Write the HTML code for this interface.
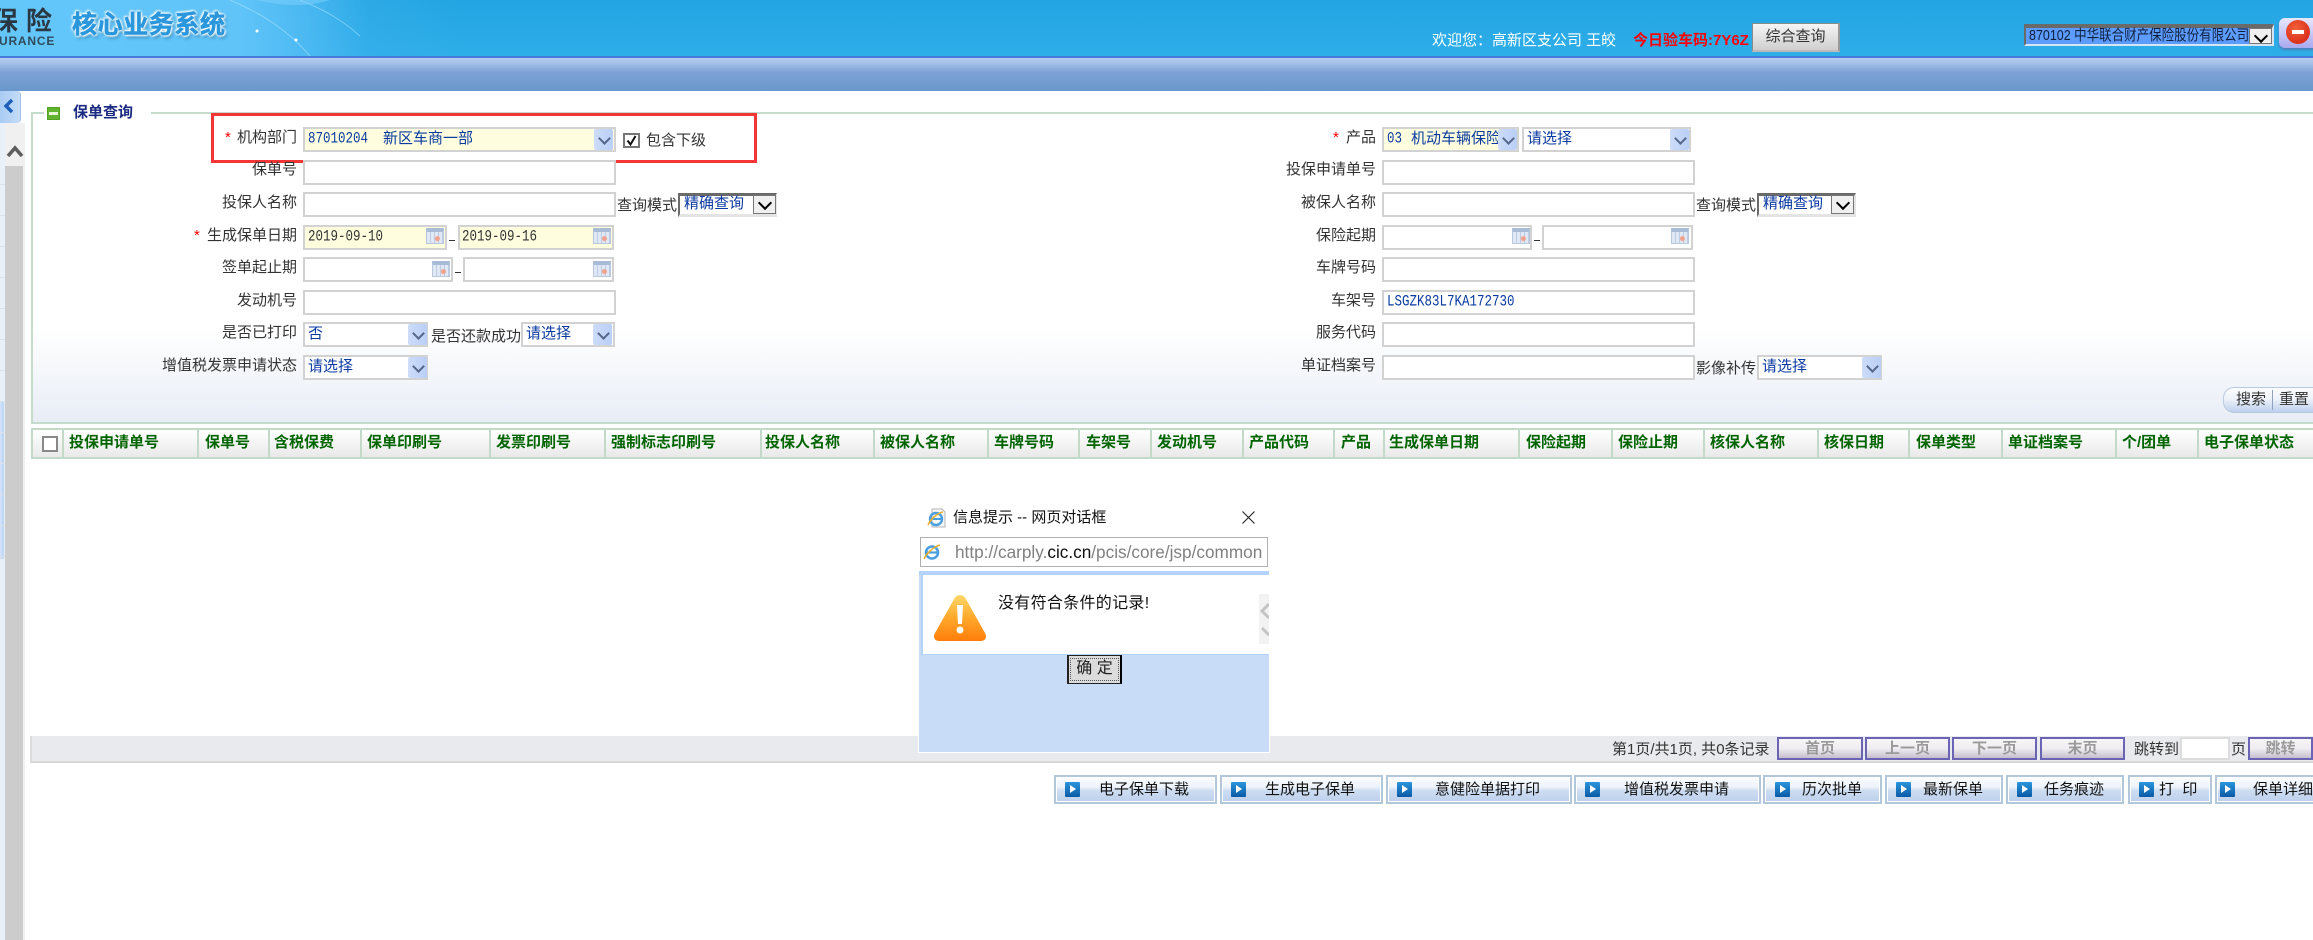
<!DOCTYPE html>
<html lang="zh">
<head>
<meta charset="utf-8">
<title>保单查询</title>
<style>
*{box-sizing:border-box}
html,body{margin:0;padding:0;width:2313px;height:940px;overflow:hidden;background:#fff}
body{position:relative;font-family:"Liberation Sans","WenQuanYi Zen Hei","Noto Sans CJK SC",sans-serif;font-size:15px;color:#333}
.a{position:absolute}
.t{position:absolute;white-space:nowrap;line-height:20px;height:20px}
.l{position:absolute;white-space:nowrap;line-height:20px;height:20px;width:200px;text-align:right}
.s{position:absolute;color:#f00;font-size:15px;line-height:20px;font-family:"Liberation Sans",sans-serif}
.i{position:absolute;height:25px;border:2px solid #d2d2d2;background:#fff}
.y{background:#fefedf}
.v{position:absolute;white-space:pre;line-height:20px;height:20px;color:#0b3aa0;margin-top:1px}
.m{font-family:"Liberation Mono","WenQuanYi Zen Hei",monospace;font-size:12.5px;transform:scaleY(1.22);transform-origin:50% 50%;margin-top:0}
.b{position:absolute;width:19px;height:21px;border-radius:2px;background:linear-gradient(90deg,#cddcf9,#b9cff6)}
.b::after{content:"";position:absolute;left:6px;top:5px;width:7px;height:7px;border-right:2.5px solid #56658a;border-bottom:2.5px solid #56658a;transform:rotate(45deg)}
.c{position:absolute;width:18px;height:16px;border:1px solid #b9c8dc;background:radial-gradient(circle at 65% 60%,#f2a28c 0 2px,transparent 3px),repeating-linear-gradient(90deg,#dfe8f4 0 3px,#bccde4 3px 4px);border-top:4px solid #a8bcd8}
.n{position:absolute;height:24px;background:#fff;border-top:3px solid #6a6a6a;border-left:2px solid #6a6a6a;border-bottom:3px solid #e4e4e4;border-right:2px solid #e4e4e4}
.k{position:absolute;width:23px;height:19px;background:#f0f0f0;border:1px solid #777}
.k::after{content:"";position:absolute;left:6px;top:2px;width:8px;height:8px;border-right:2px solid #000;border-bottom:2px solid #000;transform:rotate(45deg)}
.h{position:absolute;top:428px;height:31px;background:linear-gradient(#fff,#e9e9e9);border:solid #c3dacb;border-width:2px 2px 2px 0}
.ht{position:absolute;top:433px;white-space:nowrap;line-height:20px;color:#006400;font-weight:bold;font-size:15px}
.p{position:absolute;top:737px;height:23px;border:2px solid #6b63b3;background:linear-gradient(#f7f5f8,#efedf1 50%,#c6bfce);color:#9a9a9a;text-align:center;line-height:19px;font-weight:bold;font-size:15px}
.q{position:absolute;top:775px;height:29px;border:2px solid #b3c7da;background:linear-gradient(#fbfcff,#eef3fb 40%,#ccdcf1 55%,#bdd0ec);box-shadow:inset 0 0 0 1px #fff}
.w{position:absolute;top:782px;width:15px;height:15px;background:linear-gradient(#2a96dc,#0a5aa6);border-radius:1px}
.w::after{content:"";position:absolute;left:5px;top:3px;border-left:6px solid #fff;border-top:4px solid transparent;border-bottom:4px solid transparent}
.qt{position:absolute;top:780px;white-space:pre;line-height:20px;color:#111}
.st{position:absolute;left:0;width:5px;height:30px;border-bottom:1px solid #dce2ea}
</style>
</head>
<body>

<!-- header -->
<div class="a" style="left:0;top:0;width:2313px;height:56px;background:linear-gradient(#22a5e2,#2eaee9)"></div>
<div class="a" style="left:0;top:0;width:460px;height:56px;background:linear-gradient(90deg,#64c7fa 0,#60c4f9 52%,rgba(88,190,246,.75) 66%,rgba(60,176,236,.4) 80%,rgba(46,174,233,0) 100%)"></div>
<svg class="a" style="left:0;top:0" width="460" height="56" viewBox="0 0 460 56"><path d="M230 0C262 14 288 30 310 56M300 0C320 8 340 18 360 36" fill="none" stroke="#a8e2ff" stroke-width="1" opacity=".6"/><circle cx="257" cy="31" r="1.500" fill="#fff"/><circle cx="296" cy="40" r="1.500" fill="#fff"/><path d="M255 0Q300 10 330 0Z" fill="#7fd2fb" opacity=".5"/></svg>
<div class="t" style="left:-8px;top:6px;height:30px;line-height:30px;font-size:26px;letter-spacing:8px;font-weight:bold;color:#2a3844">保险</div>
<div class="t" style="left:-1px;top:31px;font-size:12px;font-weight:bold;letter-spacing:.8px;color:#2f4a5c">URANCE</div>
<div class="t" style="left:72px;top:9px;height:32px;line-height:32px;font-size:25px;font-weight:bold;letter-spacing:.6px;color:#2a97dc;-webkit-text-stroke:.6px #2a97dc;text-shadow:0 0 2px #fff,0 0 3px #fff,0 0 3px #fff,1px 1px 2px #fff,-1px -1px 2px #fff,2px 3px 3px #2a7fb0">核心业务系统</div>
<div class="a" style="left:0;top:56px;width:2313px;height:2px;background:#4a78d8"></div>
<div class="a" style="left:0;top:58px;width:2313px;height:33px;background:linear-gradient(#b4ccee,#a6c1e8 15%,#7ea3d6 42%,#6a97cc)"></div>

<div class="t" style="left:1432px;top:31px;color:#fff">欢迎您：高新区支公司 王皎</div>
<div class="t" style="left:1633px;top:31px;color:#f00;font-weight:bold">今日验车码:7Y6Z</div>
<div class="a" style="left:1752px;top:23px;width:88px;height:29px;border:1px solid #8a8a8a;border-right:2px solid #999;border-bottom:2px solid #bbb;background:linear-gradient(#f5f5f5,#cfcfcf);text-align:center;line-height:26px;color:#333">综合查询</div>

<div class="a" style="left:2024px;top:24px;width:250px;height:22px;background:#5c9cff;border-top:4px solid #6a6a6a;border-left:2px solid #6a6a6a;border-bottom:2px solid #d6e4f4;border-right:2px solid #d6e4f4"></div>
<div class="t" style="left:2029px;top:25px;width:220px;overflow:hidden;color:#102040;font-size:12.5px;transform:scaleY(1.2)">870102 中华联合财产保险股份有限公司</div>
<div class="k" style="left:2249px;top:28px;height:16px"></div>
<div class="a" style="left:2279px;top:18px;width:40px;height:30px;border-radius:6px;background:linear-gradient(#e8e8ff,#a9a9f0);box-shadow:0 2px 2px #4f7fb8"></div>
<div class="a" style="left:2286px;top:20px;width:24px;height:24px;border-radius:50%;background:radial-gradient(circle at 40% 35%,#f2603a,#d01f10)"></div>
<div class="a" style="left:2292px;top:30px;width:12px;height:4px;background:#fff"></div>

<!-- sidebar -->
<div class="a" style="left:0;top:91px;width:21px;height:32px;background:linear-gradient(90deg,#a9cbf3,#c4dcf8);border-radius:0 4px 4px 0;border-right:1px solid #a2bfe4"></div>
<svg class="a" style="left:2px;top:97px" width="14" height="18" viewBox="0 0 14 18"><path d="M10 3 L4 9 L10 15" fill="none" stroke="#1b5fb8" stroke-width="3.4"/></svg>
<div class="a" style="left:0;top:123px;width:5px;height:817px;background:#e9f0f8"></div>
<div class="a" style="left:0;top:402px;width:4px;height:157px;background:linear-gradient(90deg,#d5e5f9,#b9d3f5)"></div>
<div class="st" style="top:155px"></div><div class="st" style="top:186px"></div><div class="st" style="top:217px"></div><div class="st" style="top:248px"></div><div class="st" style="top:279px"></div><div class="st" style="top:310px"></div><div class="st" style="top:341px"></div><div class="st" style="top:372px"></div><div class="st" style="top:403px"></div><div class="st" style="top:434px"></div><div class="st" style="top:465px"></div><div class="st" style="top:496px"></div><div class="st" style="top:527px"></div>
<div class="a" style="left:5px;top:123px;width:20px;height:817px;background:#f0f0f0"></div>
<div class="a" style="left:5px;top:166px;width:18px;height:774px;background:#cccccc"></div>
<svg class="a" style="left:6px;top:143px" width="18" height="18" viewBox="0 0 18 18"><path d="M2 13 L9 5 L16 13" fill="none" stroke="#5e5e5e" stroke-width="3.6"/></svg>

<!-- fieldset -->
<div class="a" style="left:31px;top:112px;width:2282px;height:312px;border:solid #c5dbcc;border-width:2px 0 2px 2px;background:linear-gradient(#fff 0,#fff 70%,#e8edf6 100%)"></div>
<div class="a" style="left:44px;top:105px;width:107px;height:16px;background:#fff"></div>
<div class="a" style="left:47px;top:107px;width:13px;height:13px;background:#62b32e;border:1px solid #54a024"></div>
<div class="a" style="left:49px;top:112px;width:9px;height:3px;background:#e9f6d8"></div>
<div class="t" style="left:73px;top:103px;color:#1a2a80;font-weight:bold">保单查询</div>

<!-- red box -->
<div class="a" style="left:211px;top:113px;width:546px;height:50px;border:3px solid #f43535"></div>

<!-- left col -->
<div class="s" style="left:225px;top:128px">*</div>
<div class="l" style="left:97px;top:128px">机构部门</div>
<div class="i y" style="left:303px;top:127px;width:313px"></div>
<div class="v m" style="left:308px;top:129px">87010204</div>
<div class="v" style="left:383px;top:128px">新区车商一部</div>
<div class="b" style="left:594px;top:129px"></div>
<div class="a" style="left:623px;top:133px;width:17px;height:15px;border:2px solid #777;background:#fff"></div>
<svg class="a" style="left:625px;top:134px" width="13" height="13" viewBox="0 0 13 13"><path d="M2.500 6.500 L5.500 10.500 L10.500 2" fill="none" stroke="#111" stroke-width="2"/></svg>
<div class="t" style="left:646px;top:131px">包含下级</div>

<div class="l" style="left:97px;top:160px">保单号</div>
<div class="i" style="left:303px;top:160px;width:313px"></div>

<div class="l" style="left:97px;top:193px">投保人名称</div>
<div class="i" style="left:303px;top:192px;width:313px"></div>
<div class="t" style="left:617px;top:196px">查询模式</div>
<div class="n" style="left:678px;top:193px;width:99px"></div>
<div class="v" style="left:684px;top:193px">精确查询</div>
<div class="k" style="left:753px;top:195px"></div>

<div class="s" style="left:194px;top:226px">*</div>
<div class="l" style="left:97px;top:226px">生成保单日期</div>
<div class="i y" style="left:303px;top:225px;width:144px"></div>
<div class="v m" style="left:308px;top:227px;color:#333">2019-09-10</div>
<div class="c" style="left:426px;top:228px"></div>
<div class="a" style="left:449px;top:240px;width:6px;height:1px;background:#333"></div>
<div class="i y" style="left:458px;top:225px;width:156px"></div>
<div class="v m" style="left:462px;top:227px;color:#333">2019-09-16</div>
<div class="c" style="left:593px;top:228px"></div>

<div class="l" style="left:97px;top:258px">签单起止期</div>
<div class="i" style="left:303px;top:257px;width:150px"></div>
<div class="c" style="left:432px;top:261px"></div>
<div class="a" style="left:455px;top:272px;width:6px;height:1px;background:#333"></div>
<div class="i" style="left:463px;top:257px;width:151px"></div>
<div class="c" style="left:593px;top:261px"></div>

<div class="l" style="left:97px;top:291px">发动机号</div>
<div class="i" style="left:303px;top:290px;width:313px"></div>

<div class="l" style="left:97px;top:323px">是否已打印</div>
<div class="i" style="left:303px;top:322px;width:125px"></div>
<div class="v" style="left:308px;top:323px">否</div>
<div class="b" style="left:408px;top:324px"></div>
<div class="t" style="left:431px;top:327px">是否还款成功</div>
<div class="i" style="left:521px;top:322px;width:94px"></div>
<div class="v" style="left:526px;top:323px">请选择</div>
<div class="b" style="left:593px;top:324px"></div>

<div class="l" style="left:97px;top:356px">增值税发票申请状态</div>
<div class="i" style="left:303px;top:355px;width:125px"></div>
<div class="v" style="left:308px;top:356px">请选择</div>
<div class="b" style="left:408px;top:357px"></div>

<!-- right col -->
<div class="s" style="left:1333px;top:128px">*</div>
<div class="l" style="left:1176px;top:128px">产品</div>
<div class="i y" style="left:1382px;top:127px;width:137px"></div>
<div class="v m" style="left:1387px;top:129px">03</div>
<div class="v" style="left:1411px;top:128px">机动车辆保险</div>
<div class="b" style="left:1498px;top:129px"></div>
<div class="i" style="left:1522px;top:127px;width:169px"></div>
<div class="v" style="left:1527px;top:128px">请选择</div>
<div class="b" style="left:1670px;top:129px"></div>

<div class="l" style="left:1176px;top:160px">投保申请单号</div>
<div class="i" style="left:1382px;top:160px;width:313px"></div>

<div class="l" style="left:1176px;top:193px">被保人名称</div>
<div class="i" style="left:1382px;top:192px;width:313px"></div>
<div class="t" style="left:1696px;top:196px">查询模式</div>
<div class="n" style="left:1757px;top:193px;width:99px"></div>
<div class="v" style="left:1763px;top:193px">精确查询</div>
<div class="k" style="left:1831px;top:195px"></div>

<div class="l" style="left:1176px;top:226px">保险起期</div>
<div class="i" style="left:1382px;top:225px;width:150px"></div>
<div class="c" style="left:1512px;top:228px"></div>
<div class="a" style="left:1534px;top:240px;width:6px;height:1px;background:#333"></div>
<div class="i" style="left:1542px;top:225px;width:151px"></div>
<div class="c" style="left:1671px;top:228px"></div>

<div class="l" style="left:1176px;top:258px">车牌号码</div>
<div class="i" style="left:1382px;top:257px;width:313px"></div>

<div class="l" style="left:1176px;top:291px">车架号</div>
<div class="i" style="left:1382px;top:290px;width:313px"></div>
<div class="v m" style="left:1387px;top:292px">LSGZK83L7KA172730</div>

<div class="l" style="left:1176px;top:323px">服务代码</div>
<div class="i" style="left:1382px;top:322px;width:313px"></div>

<div class="l" style="left:1176px;top:356px">单证档案号</div>
<div class="i" style="left:1382px;top:355px;width:313px"></div>
<div class="t" style="left:1696px;top:359px">影像补传</div>
<div class="i" style="left:1757px;top:355px;width:125px"></div>
<div class="v" style="left:1762px;top:356px">请选择</div>
<div class="b" style="left:1862px;top:357px"></div>

<!-- search pill -->
<div class="a" style="left:2223px;top:387px;width:110px;height:26px;border-radius:11px;border:1px solid #b9c9dc;background:linear-gradient(#fbfcfe,#eef2f9 45%,#bcd0ee)"></div>
<div class="a" style="left:2272px;top:390px;width:1px;height:20px;background:#8fa3c0"></div>
<div class="t" style="left:2236px;top:390px">搜索</div>
<div class="t" style="left:2279px;top:390px">重置</div>

<!-- table header -->
<div class="h" style="left:31px;width:33px;border-left-width:2px"></div>
<div class="a" style="left:42px;top:436px;width:16px;height:16px;border:2px solid #888;background:#fff"></div>
<div class="h" style="left:64px;width:135px"></div><div class="ht" style="left:69px">投保申请单号</div>
<div class="h" style="left:199px;width:71px"></div><div class="ht" style="left:205px">保单号</div>
<div class="h" style="left:270px;width:92px"></div><div class="ht" style="left:274px">含税保费</div>
<div class="h" style="left:362px;width:129px"></div><div class="ht" style="left:367px">保单印刷号</div>
<div class="h" style="left:491px;width:115px"></div><div class="ht" style="left:496px">发票印刷号</div>
<div class="h" style="left:606px;width:156px"></div><div class="ht" style="left:611px">强制标志印刷号</div>
<div class="h" style="left:762px;width:113px"></div><div class="ht" style="left:765px">投保人名称</div>
<div class="h" style="left:875px;width:114px"></div><div class="ht" style="left:880px">被保人名称</div>
<div class="h" style="left:989px;width:91px"></div><div class="ht" style="left:994px">车牌号码</div>
<div class="h" style="left:1080px;width:72px"></div><div class="ht" style="left:1086px">车架号</div>
<div class="h" style="left:1152px;width:92px"></div><div class="ht" style="left:1157px">发动机号</div>
<div class="h" style="left:1244px;width:91px"></div><div class="ht" style="left:1249px">产品代码</div>
<div class="h" style="left:1335px;width:50px"></div><div class="ht" style="left:1341px">产品</div>
<div class="h" style="left:1385px;width:135px"></div><div class="ht" style="left:1389px">生成保单日期</div>
<div class="h" style="left:1520px;width:93px"></div><div class="ht" style="left:1526px">保险起期</div>
<div class="h" style="left:1613px;width:92px"></div><div class="ht" style="left:1618px">保险止期</div>
<div class="h" style="left:1705px;width:114px"></div><div class="ht" style="left:1710px">核保人名称</div>
<div class="h" style="left:1819px;width:91px"></div><div class="ht" style="left:1824px">核保日期</div>
<div class="h" style="left:1910px;width:93px"></div><div class="ht" style="left:1916px">保单类型</div>
<div class="h" style="left:2003px;width:114px"></div><div class="ht" style="left:2008px">单证档案号</div>
<div class="h" style="left:2117px;width:82px"></div><div class="ht" style="left:2122px">个/团单</div>
<div class="h" style="left:2199px;width:114px;border-right-width:0"></div><div class="ht" style="left:2204px">电子保单状态</div>

<!-- pager -->
<div class="a" style="left:30px;top:736px;width:2283px;height:27px;background:#e9eaee;border-bottom:2px solid #d8d8d8;border-left:2px solid #dcdcdc"></div>
<div class="t" style="left:1612px;top:740px">第1页/共1页, 共0条记录</div>
<div class="p" style="left:1777px;width:86px">首页</div>
<div class="p" style="left:1865px;width:85px">上一页</div>
<div class="p" style="left:1952px;width:85px">下一页</div>
<div class="p" style="left:2040px;width:85px">末页</div>
<div class="t" style="left:2134px;top:740px">跳转到</div>
<div class="a" style="left:2180px;top:737px;width:50px;height:23px;background:#fff;border:2px solid #dcdcdc"></div>
<div class="t" style="left:2231px;top:740px">页</div>
<div class="p" style="left:2248px;width:65px">跳转</div>

<!-- action buttons -->
<div class="q" style="left:1054px;width:163px"></div><div class="w" style="left:1065px"></div><div class="qt" style="left:1099px">电子保单下载</div>
<div class="q" style="left:1220px;width:163px"></div><div class="w" style="left:1231px"></div><div class="qt" style="left:1265px">生成电子保单</div>
<div class="q" style="left:1386px;width:186px"></div><div class="w" style="left:1397px"></div><div class="qt" style="left:1435px">意健险单据打印</div>
<div class="q" style="left:1574px;width:187px"></div><div class="w" style="left:1585px"></div><div class="qt" style="left:1624px">增值税发票申请</div>
<div class="q" style="left:1763px;width:119px"></div><div class="w" style="left:1775px"></div><div class="qt" style="left:1802px">历次批单</div>
<div class="q" style="left:1885px;width:118px"></div><div class="w" style="left:1896px"></div><div class="qt" style="left:1923px">最新保单</div>
<div class="q" style="left:2006px;width:118px"></div><div class="w" style="left:2017px"></div><div class="qt" style="left:2044px">任务痕迹</div>
<div class="q" style="left:2128px;width:84px"></div><div class="w" style="left:2139px"></div><div class="qt" style="left:2159px">打  印</div>
<div class="q" style="left:2215px;width:110px"></div><div class="w" style="left:2220px"></div><div class="qt" style="left:2253px">保单详细</div>

<!-- dialog -->
<div class="a" style="left:918px;top:500px;width:352px;height:253px;background:#fff"></div>
<svg class="a" style="left:927px;top:508px" width="20" height="20" viewBox="0 0 20 20">
<path d="M5 1H15L18 4V19H5Z" fill="#f6f6f6" stroke="#b5b5b5"/>
<circle cx="9" cy="11" r="6" fill="none" stroke="#4a9fe0" stroke-width="2.4"/>
<path d="M4 11H14" stroke="#4a9fe0" stroke-width="2"/>
<path d="M1 17C3 12 10 5 16 4" fill="none" stroke="#e8b030" stroke-width="1.6"/>
</svg>
<div class="t" style="left:953px;top:508px;color:#111;font-size:15px;font-family:'Liberation Sans','Noto Sans CJK SC',sans-serif">信息提示 -- 网页对话框</div>
<svg class="a" style="left:1242px;top:511px" width="13" height="13" viewBox="0 0 13 13"><path d="M0.500 0.500L12.500 12.500M12.500 0.500L0.500 12.500" stroke="#222" stroke-width="1.1"/></svg>
<div class="a" style="left:920px;top:537px;width:348px;height:30px;border:1px solid #b0b0b0;background:#fff"></div>
<svg class="a" style="left:923px;top:543px" width="18" height="18" viewBox="0 0 18 18">
<circle cx="9" cy="9.500" r="6" fill="none" stroke="#4a9fe0" stroke-width="2.6"/>
<path d="M3.500 9.500H14" stroke="#4a9fe0" stroke-width="2.2"/>
<path d="M1 16C3 11 10 4 17 2" fill="none" stroke="#e8b030" stroke-width="1.6"/>
</svg>
<div class="t" style="left:955px;top:542px;width:309px;overflow:hidden;font-size:17.2px;color:#808080;font-family:'Liberation Sans',sans-serif">http://carply.<span style="color:#111">cic.cn</span>/pcis/core/jsp/common</div>
<div class="a" style="left:919px;top:571px;width:350px;height:181px;background:#c9dcf7;border-top:4px solid #b5d3ff"></div>
<div class="a" style="left:921px;top:574px;width:348px;height:81px;background:#fff;border:solid #b5d3ff;border-width:1px 0 1px 2px"></div>
<svg class="a" style="left:932px;top:592px" width="56" height="52" viewBox="0 0 56 52">
<defs><linearGradient id="wg" x1="0" y1="0" x2="0" y2="1"><stop offset="0" stop-color="#ffd76a"/><stop offset=".5" stop-color="#ffa82a"/><stop offset="1" stop-color="#ff7d0a"/></linearGradient></defs>
<path d="M28 3C31 3 33 5 34.500 8L53 41C55.500 46 53 49 48 49H8C3 49 .5 46 3 41L21.500 8C23 5 25 3 28 3Z" fill="url(#wg)"/>
<path d="M25 13H31L30 32H26Z" fill="#fff"/><circle cx="28" cy="38" r="3.500" fill="#fff"/>
</svg>
<div class="t" style="left:998px;top:594px;color:#111;font-size:16px;letter-spacing:.3px">没有符合条件的记录!</div>
<div class="a" style="left:1259px;top:594px;width:10px;height:50px;background:#f2f2f2"></div>
<svg class="a" style="left:1259px;top:596px" width="10" height="48" viewBox="0 0 10 48"><path d="M10 8L3 15L10 22M3 32L10 39" fill="none" stroke="#c4c4c4" stroke-width="3"/></svg>
<div class="a" style="left:1067px;top:655px;width:55px;height:29px;background:#dcdcdc;border:1px solid #222;border-right:2px solid #000;border-left:2px solid #222;text-align:center;line-height:25px;font-size:16px;color:#222"><div class="a" style="left:1px;top:2px;right:1px;bottom:2px;border:1px dotted #555"></div>确 定</div>

</body>
</html>
